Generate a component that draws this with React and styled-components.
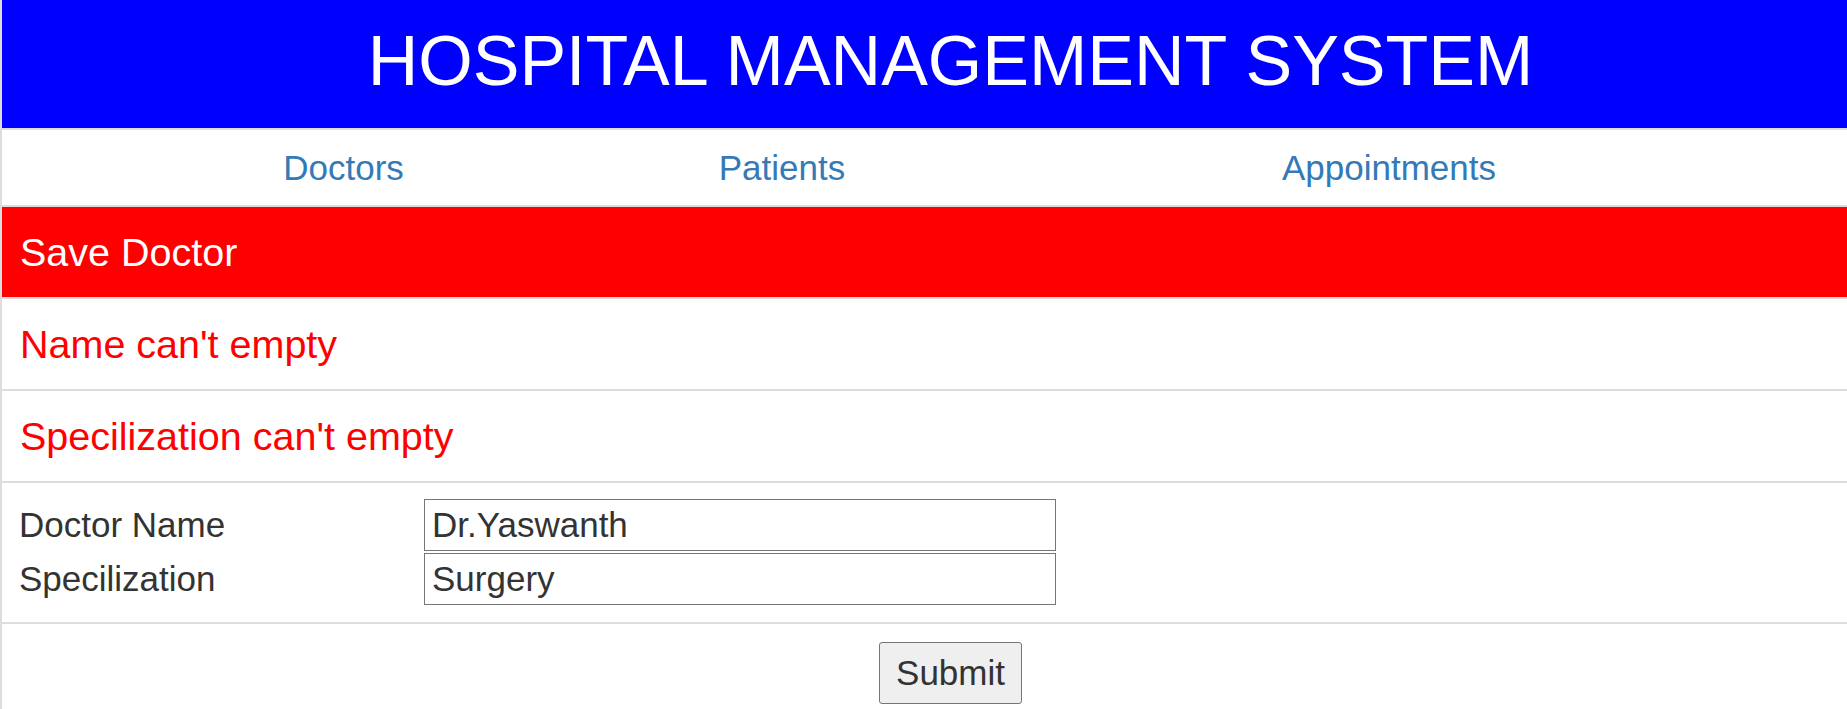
import React from "react";
import styled, { createGlobalStyle } from "styled-components";

const GlobalStyle = createGlobalStyle`
  html, body {
    margin: 0;
    padding: 0;
    overflow: hidden;
    background: #fff;
    font-family: "Liberation Sans", Arial, sans-serif;
  }
`;

const Page = styled.div`
  width: 1897px;
  border-left: 2px solid #ddd;
`;

const Header = styled.h1`
  margin: 0;
  padding: 21px 0 27px;
  background: #0000ff;
  color: #fff;
  font-size: 70px;
  font-weight: normal;
  line-height: 80px;
  text-align: center;
`;

const Row = styled.div`
  border-top: 2px solid #ddd;
`;

const Nav = styled(Row)`
  display: grid;
  grid-template-columns: 683px 194px 1fr;
  padding: 18px 0 17px;
`;

const NavLink = styled.a`
  color: #337ab7;
  font-size: 35px;
  line-height: 40px;
  text-align: center;
  text-decoration: none;
  cursor: pointer;
`;

const Message = styled(Row)`
  padding: 23px 18px 22px;
  font-size: 39.5px;
  line-height: 45px;
  background: ${(p) => (p.$banner ? "#ff0000" : "#fff")};
  color: ${(p) => (p.$banner ? "#fff" : "#ff0000")};
`;

const Form = styled(Row)`
  display: grid;
  grid-template-columns: 405px 632px;
  row-gap: 2px;
  align-items: center;
  padding: 16px 17px 17px;
`;

const Label = styled.label`
  color: #333;
  font-size: 35px;
  line-height: 40px;
`;

const Input = styled.input`
  box-sizing: border-box;
  width: 632px;
  height: 52px;
  margin: 0;
  padding: 0 7px;
  border: 1px solid #767676;
  border-radius: 0;
  color: #333;
  font-family: inherit;
  font-size: 35px;
  line-height: 40px;
  outline: none;
`;

const Actions = styled(Row)`
  padding: 18px 0 17px;
  text-align: center;
`;

const Button = styled.button`
  margin: 0;
  padding: 10px 16px;
  border: 1px solid #767676;
  border-radius: 3px;
  background: #efefef;
  color: #333;
  font-family: inherit;
  font-size: 35px;
  line-height: 40px;
  cursor: pointer;
`;

const App = () => {
  return (
    <>
      <GlobalStyle />
      <Page>
        <Header>HOSPITAL MANAGEMENT SYSTEM</Header>
        <Nav>
          <NavLink>Doctors</NavLink>
          <NavLink>Patients</NavLink>
          <NavLink>Appointments</NavLink>
        </Nav>
        <Message $banner>Save Doctor</Message>
        <Message>Name can't empty</Message>
        <Message>Specilization can't empty</Message>
        <Form>
          <Label>Doctor Name</Label>
          <Input defaultValue="Dr.Yaswanth" />
          <Label>Specilization</Label>
          <Input defaultValue="Surgery" />
        </Form>
        <Actions>
          <Button>Submit</Button>
        </Actions>
      </Page>
    </>
  );
};

export default App;
